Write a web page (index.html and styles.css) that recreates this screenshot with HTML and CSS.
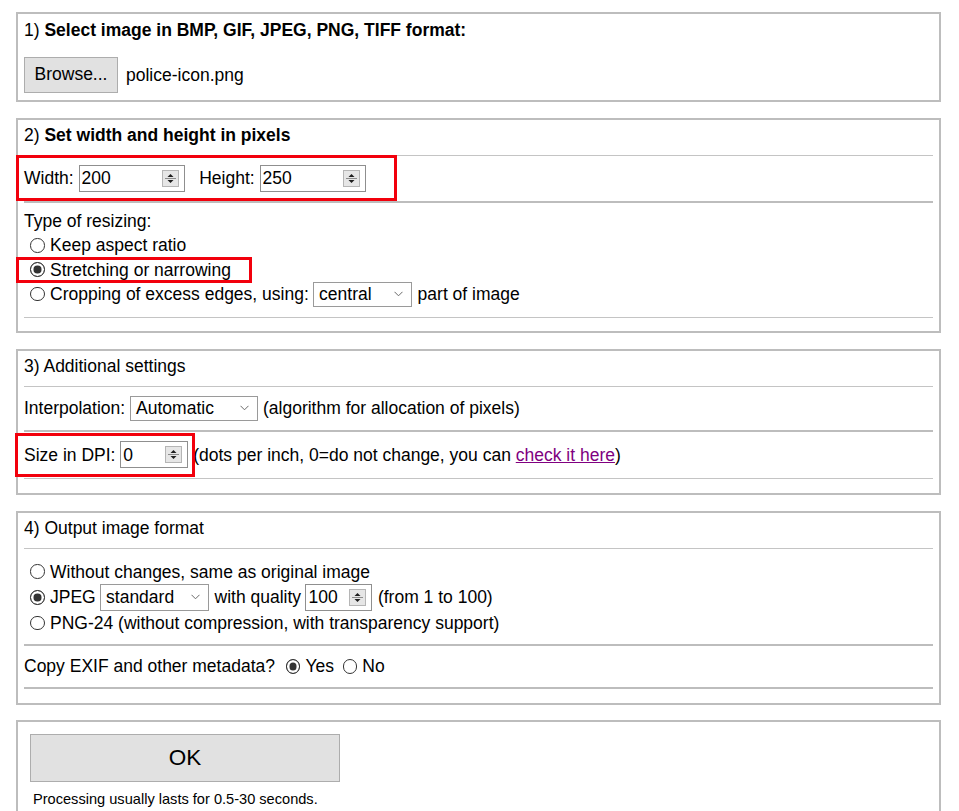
FILE: index.html
```html
<!DOCTYPE html>
<html lang="en">
<head>
<meta charset="utf-8">
<title>Resize image</title>
<link rel="stylesheet" href="styles.css">
</head>
<body>
<form class="page">
  <section class="box box1">
    <div class="head">1) <b>Select image in BMP, GIF, JPEG, PNG, TIFF format:</b></div>
    <div class="filerow">
      <button type="button" class="btn browse">Browse...</button>
      <span>police-icon.png</span>
    </div>
  </section>

  <section class="box box2">
    <div class="head">2) <b>Set width and height in pixels</b></div>
    <div class="rule r-head"></div>
    <div class="line size-row mark mark-size">
      <span>Width:</span>
      <span class="num n-wide"><input class="val" type="text" value="200"><svg class="spin" width="17" height="17" viewBox="0 0 17 17"><rect x=".5" y=".5" width="16" height="16" fill="#e6e6e6" stroke="#b5b5b5"/><line x1="3" y1="8.5" x2="14" y2="8.5" stroke="#8a8a8a"/><path d="M5.5 7 L8.5 4 L11.5 7Z" fill="#1e1e1e"/><path d="M5.5 10 L8.5 13 L11.5 10Z" fill="#1e1e1e"/></svg></span>
      <span class="height-label">Height:</span>
      <span class="num n-wide"><input class="val" type="text" value="250"><svg class="spin" width="17" height="17" viewBox="0 0 17 17"><rect x=".5" y=".5" width="16" height="16" fill="#e6e6e6" stroke="#b5b5b5"/><line x1="3" y1="8.5" x2="14" y2="8.5" stroke="#8a8a8a"/><path d="M5.5 7 L8.5 4 L11.5 7Z" fill="#1e1e1e"/><path d="M5.5 10 L8.5 13 L11.5 10Z" fill="#1e1e1e"/></svg></span>
    </div>
    <div class="rule thick"></div>
    <div class="list list-resize">
      <div class="line item">Type of resizing:</div>
      <label class="line item opt"><input class="radio" type="radio" name="mode"><span>Keep aspect ratio</span></label>
      <label class="line item opt mark mark-stretch"><input class="radio" type="radio" name="mode" checked><span>Stretching or narrowing</span></label>
      <label class="line item opt"><input class="radio" type="radio" name="mode"><span>Cropping of excess edges, using:</span>
        <span class="sel s-central"><span>central</span><svg class="chev" width="9" height="6" viewBox="0 0 9 6"><polyline points="0.5,0.8 4.5,4.8 8.5,0.8" fill="none" stroke="#6a6a6a" stroke-width="1"/></svg></span>
        <span>part of image</span></label>
    </div>
    <div class="rule r-end"></div>
  </section>

  <section class="box box3">
    <div class="head">3) Additional settings</div>
    <div class="rule r-head"></div>
    <div class="line interp-row">
      <span>Interpolation:</span>
      <span class="sel s-auto"><span>Automatic</span><svg class="chev" width="9" height="6" viewBox="0 0 9 6"><polyline points="0.5,0.8 4.5,4.8 8.5,0.8" fill="none" stroke="#6a6a6a" stroke-width="1"/></svg></span>
      <span>(algorithm for allocation of pixels)</span>
    </div>
    <div class="rule thick"></div>
    <div class="line dpi-row mark mark-dpi">
      <span>Size in DPI:</span>
      <span class="num n-small"><input class="val" type="text" value="0"><svg class="spin" width="17" height="17" viewBox="0 0 17 17"><rect x=".5" y=".5" width="16" height="16" fill="#e6e6e6" stroke="#b5b5b5"/><line x1="3" y1="8.5" x2="14" y2="8.5" stroke="#8a8a8a"/><path d="M5.5 7 L8.5 4 L11.5 7Z" fill="#1e1e1e"/><path d="M5.5 10 L8.5 13 L11.5 10Z" fill="#1e1e1e"/></svg></span>
      <span class="dpi-note">(dots per inch, 0=do not change, you can <a href="#" class="link">check it here</a>)</span>
    </div>
    <div class="rule"></div>
  </section>

  <section class="box box4">
    <div class="head">4) Output image format</div>
    <div class="rule r-head"></div>
    <div class="list list-format">
      <label class="line fmt opt"><input class="radio" type="radio" name="fmt"><span>Without changes, same as original image</span></label>
      <label class="line fmt opt"><input class="radio" type="radio" name="fmt" checked><span>JPEG</span>
        <span class="sel s-std"><span>standard</span><svg class="chev" width="9" height="6" viewBox="0 0 9 6"><polyline points="0.5,0.8 4.5,4.8 8.5,0.8" fill="none" stroke="#6a6a6a" stroke-width="1"/></svg></span>
        <span>with quality</span>
        <span class="num n-qual"><input class="val" type="text" value="100"><svg class="spin" width="17" height="17" viewBox="0 0 17 17"><rect x=".5" y=".5" width="16" height="16" fill="#e6e6e6" stroke="#b5b5b5"/><line x1="3" y1="8.5" x2="14" y2="8.5" stroke="#8a8a8a"/><path d="M5.5 7 L8.5 4 L11.5 7Z" fill="#1e1e1e"/><path d="M5.5 10 L8.5 13 L11.5 10Z" fill="#1e1e1e"/></svg></span>
        <span>(from 1 to 100)</span></label>
      <label class="line fmt opt"><input class="radio" type="radio" name="fmt"><span>PNG-24 (without compression, with transparency support)</span></label>
    </div>
    <div class="rule thick r-fmt"></div>
    <div class="line exif-row">
      <span>Copy EXIF and other metadata?</span>
      <label class="choice c-yes"><input class="radio" type="radio" name="exif" checked><span>Yes</span></label>
      <label class="choice c-no"><input class="radio" type="radio" name="exif"><span>No</span></label>
    </div>
    <div class="rule thick"></div>
  </section>

  <section class="box box5">
    <button type="button" class="btn ok">OK</button>
    <p class="note">Processing usually lasts for 0.5-30 seconds.</p>
  </section>
</form>
</body>
</html>
```

FILE: styles.css
```css
*, *::before, *::after { box-sizing: border-box; }

html, body {
  margin: 0;
  background: #fff;
}

body {
  font-family: "Liberation Sans", Arial, sans-serif;
  font-size: 17.5px;
  line-height: 24.4px;
  color: #000;
}

.page {
  padding: 12px 18px 0 16px;
}

.box {
  border: 2px solid #bdbdbd;
  padding: 3px 6px 0;
  margin-bottom: 16px;
}

.head {
  height: 24.4px;
  white-space: nowrap;
}

.rule {
  height: 1px;
  background: #c4c4c4;
}

.rule.thick {
  height: 2px;
  background: #bdbdbd;
}

.r-head {
  margin-top: 7.6px;
}

.line {
  display: flex;
  align-items: center;
  gap: 0.28em;
  white-space: nowrap;
}

/* ---- annotation marks ---- */
.mark {
  position: relative;
}

.mark::after {
  content: "";
  position: absolute;
  border: 3px solid #f2000c;
  pointer-events: none;
}

.mark-size::after {
  left: -8px;
  top: -1px;
  width: 381px;
  height: 46px;
}

.mark-stretch::after {
  left: -8px;
  top: -0.6px;
  width: 236px;
  height: 26px;
}

.mark-dpi::after {
  left: -9px;
  top: 1px;
  width: 180px;
  height: 44px;
}

/* ---- buttons ---- */
.btn {
  font-family: inherit;
  color: #000;
  background: #e1e1e1;
  border: 1px solid #adadad;
  border-radius: 0;
  margin: 0;
  padding: 0;
  cursor: default;
}

/* ---- box 1 ---- */
.box1 {
  padding-top: 4px;
  padding-bottom: 6.7px;
}

.filerow {
  display: flex;
  align-items: center;
  gap: 8px;
  margin-top: 14.3px;
}

.browse {
  width: 94px;
  height: 36.6px;
  font-size: 17.5px;
}

/* ---- inputs ---- */
.num {
  display: inline-flex;
  align-items: center;
  height: 27px;
  border: 1px solid #8f8f8f;
  background: #fff;
  padding: 0 5px 0 2px;
}

.n-wide { width: 106px; }
.n-small { width: 68px; }
.n-qual { width: 67px; height: 26.6px; }

.val {
  flex: 1;
  min-width: 0;
  border: 0;
  padding: 0;
  margin: 0;
  font: inherit;
  color: #000;
  background: transparent;
  outline: none;
}

.spin {
  flex: none;
  display: block;
}

.sel {
  display: inline-flex;
  align-items: center;
  justify-content: space-between;
  height: 25.6px;
  border: 1px solid #9a9a9a;
  background: #fff;
  padding: 0 8px 0 5px;
}

.chev {
  display: block;
  flex: none;
}

.s-central { width: 99px; height: 25px; }
.s-auto { width: 128px; }
.s-std { width: 109px; height: 26.6px; }

/* ---- radios ---- */
.radio {
  appearance: none;
  -webkit-appearance: none;
  flex: none;
  width: 14.5px;
  height: 14.5px;
  margin: 0;
  border: 1px solid #333;
  border-radius: 50%;
  background: #fff;
}

.radio:checked {
  background: #333;
  box-shadow: inset 0 0 0 2.5px #fff;
}

.opt {
  gap: 5.5px;
  padding-left: 6px;
}

.opt > .sel,
.opt > .num {
  margin-left: -1.2px;
}

/* ---- box 2 ---- */
.box2 {
  padding-bottom: 13.3px;
}

.size-row {
  height: 45px;
}

.height-label {
  margin-left: 9.8px;
}

.list-resize {
  padding-top: 5.8px;
}

.item {
  height: 24.4px;
}

.r-end {
  margin-top: 10.3px;
}

/* ---- box 3 ---- */
.box3 {
  padding-bottom: 14.3px;
}

.interp-row {
  height: 43px;
}

.dpi-row {
  height: 45.7px;
}

.link {
  color: #800080;
  text-decoration: underline;
}

/* ---- box 4 ---- */
.box4 {
  padding-bottom: 14px;
  margin-bottom: 15px;
}

.list-format {
  padding-top: 10px;
}

.fmt {
  height: 25.7px;
}

.r-fmt {
  margin-top: 7.9px;
}

.exif-row {
  height: 41px;
}

.choice {
  display: inline-flex;
  align-items: center;
  gap: 5px;
}

.c-yes { margin-left: 6px; }
.c-no { margin-left: 4px; }

/* ---- box 5 ---- */
.box5 {
  padding: 12px 12px 20px;
  margin-bottom: 0;
}

.ok {
  display: block;
  width: 310px;
  height: 48px;
  font-size: 22.5px;
}

.note {
  margin: 9px 0 0 3px;
  font-size: 14.6px;
  line-height: 17px;
}
```
